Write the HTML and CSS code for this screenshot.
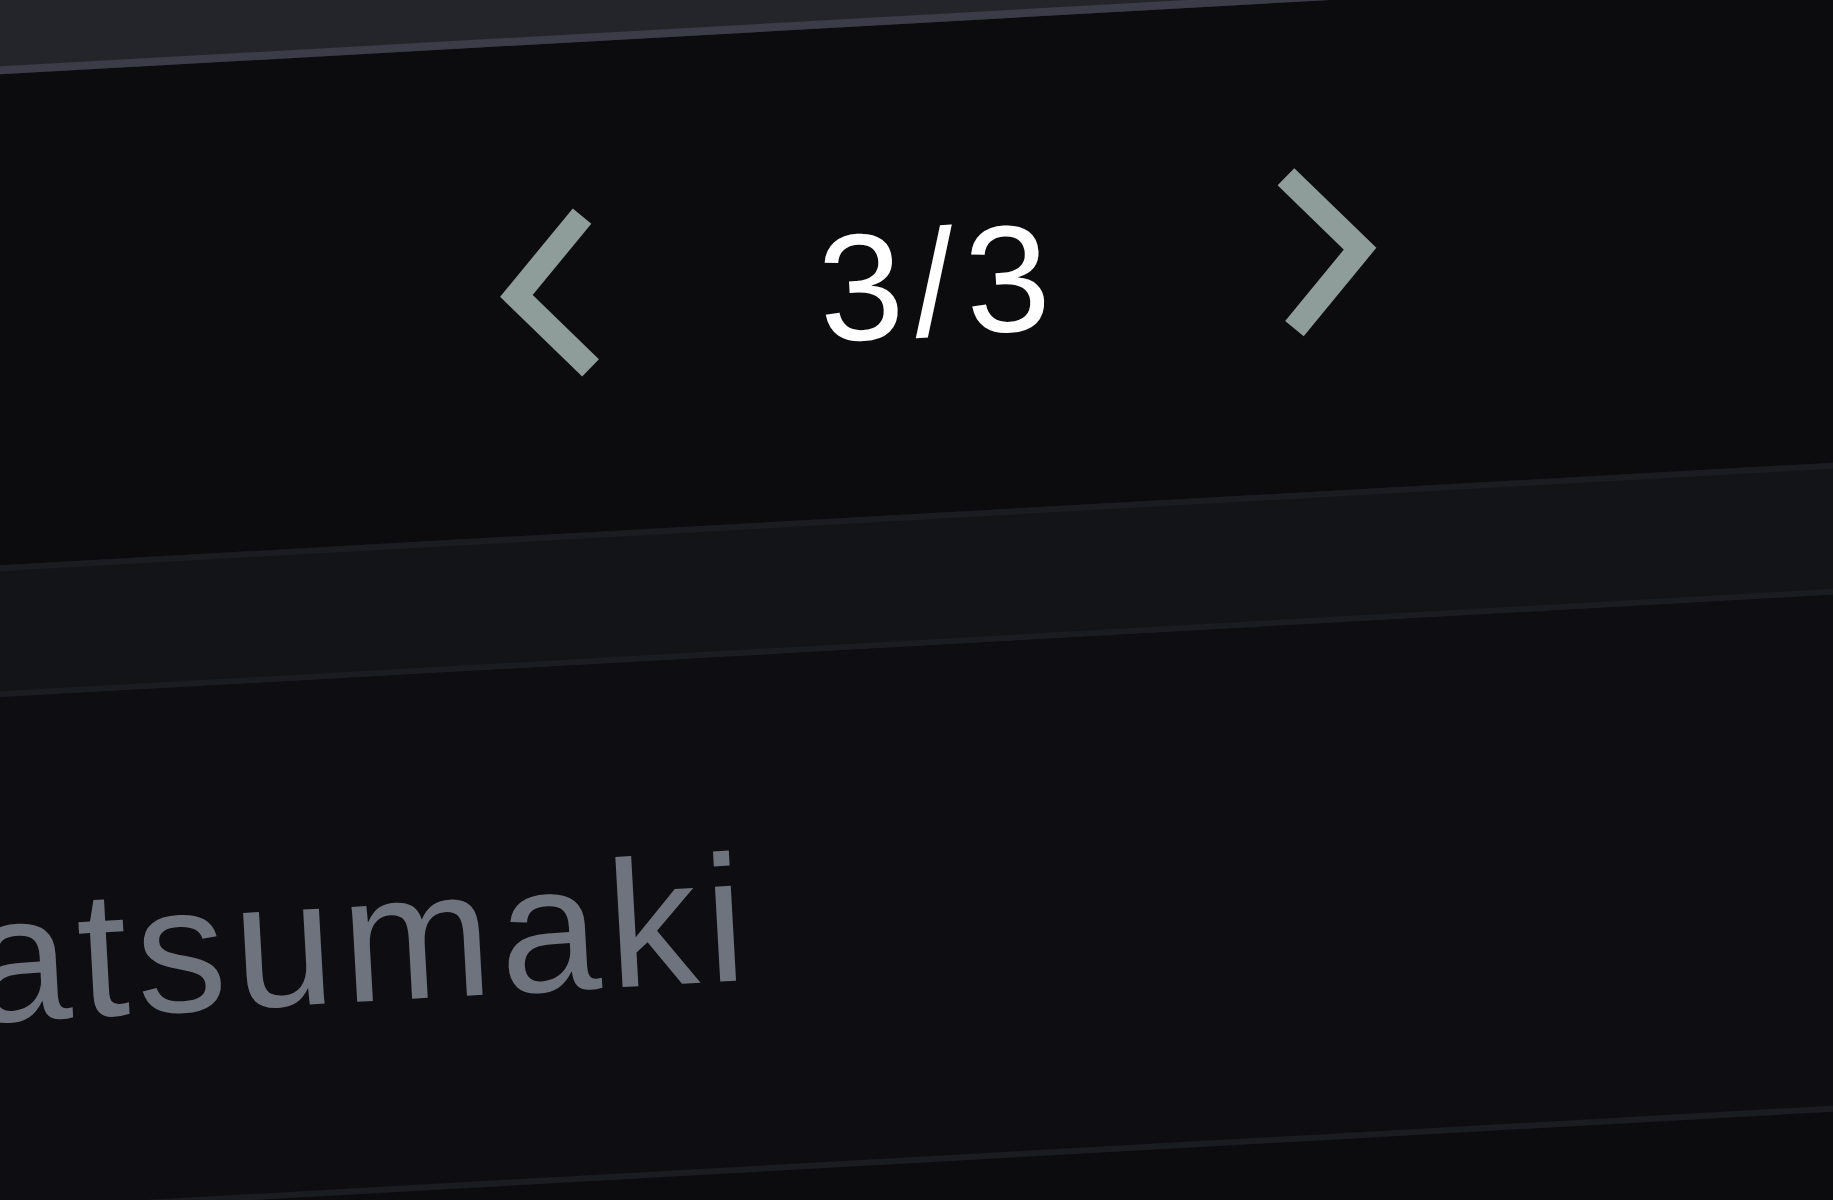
FILE: index.html
```html
<html lang="en">
<head>
  <meta charset="UTF-8">
  <meta name="viewport" content="width=device-width, initial-scale=1.0">
  <title>Roster</title>
  <link rel="stylesheet" href="styles.css">
</head>
<body>

<!-- Tilted phone screen -->
<div class="screen">

  <!-- Top Bar -->
  <header class="top-bar"></header>

  <!-- Pager -->
  <div class="pager">
    <button class="pager-btn" aria-label="Previous">
      <svg viewBox="0 0 100 164" width="100" height="164">
        <polyline points="86,6 16,82 86,158" />
      </svg>
    </button>
    <span class="pager-count">3/3</span>
    <button class="pager-btn" aria-label="Next">
      <svg viewBox="0 0 100 164" width="100" height="164">
        <polyline points="14,6 84,82 14,158" />
      </svg>
    </button>
  </div>

  <!-- Section Header -->
  <div class="section-bar"></div>

  <!-- List -->
  <ul class="list">
    <li class="list-item">Tatsumaki</li>
  </ul>

</div>

</body>
</html>
```

FILE: styles.css
```css
body {
  margin: 0;
  background-color: #0c0c0f;
  font-family: "Liberation Sans", Arial, sans-serif;
  overflow: hidden;
}

/* Screen, rotated a little as in the photo */
.screen {
  width: 2200px;
  height: 1700px;
  margin: -250px 0 0 -183px;
  background-color: #0c0c0f;
  transform: rotate(-3.2deg);
  transform-origin: 50% 50%;
}

/* Top Bar */
.top-bar {
  height: 266px;
  background-color: #24252b;
  border-bottom: 8px solid #3b3c47;
}

/* Pager */
.pager {
  display: flex;
  align-items: center;
  gap: 218px;
  padding: 160px 0 150px 701px;
}

.pager-btn {
  width: 100px;
  height: 164px;
  padding: 0;
  border: none;
  background: none;
  cursor: pointer;
}

.pager-btn svg {
  display: block;
  overflow: visible;
}

.pager-btn polyline {
  fill: none;
  stroke: #8e9d9a;
  stroke-width: 24;
  stroke-linejoin: miter;
  stroke-linecap: butt;
}

.pager-count {
  margin-top: 20px;
  color: #ffffff;
  font-size: 152px;
  line-height: 160px;
  letter-spacing: 10px;
}

/* Section Header */
.section-bar {
  height: 120px;
  background-color: #131418;
  border-top: 6px solid #1b1c21;
  border-bottom: 6px solid #1b1c21;
}

/* List */
.list {
  list-style-type: none;
  margin: 0;
  padding: 0;
  background-color: #0e0e12;
}

.list-item {
  padding: 162px 0 148px 36px;
  color: #6e737d;
  font-size: 180px;
  line-height: 200px;
  letter-spacing: 8px;
  border-bottom: 6px solid #1b1c21;
}
```
